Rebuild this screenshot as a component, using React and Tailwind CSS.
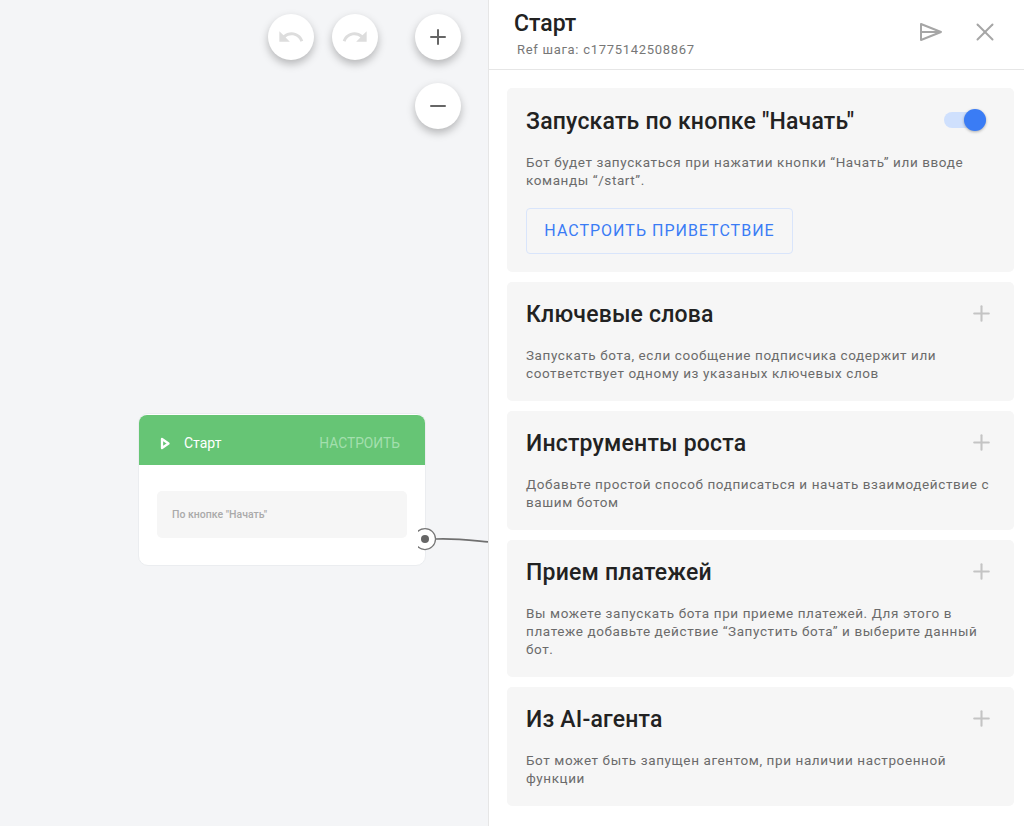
import { Plus, Minus, X } from "lucide-react";

const sections = [
  {
    title: "Ключевые слова",
    text: "Запускать бота, если сообщение подписчика содержит или соответствует одному из указаных ключевых слов",
  },
  {
    title: "Инструменты роста",
    text: "Добавьте простой способ подписаться и начать взаимодействие с вашим ботом",
  },
  {
    title: "Прием платежей",
    text: "Вы можете запускать бота при приеме платежей. Для этого в платеже добавьте действие “Запустить бота” и выберите данный бот.",
  },
  {
    title: "Из AI-агента",
    text: "Бот может быть запущен агентом, при наличии настроенной функции",
  },
];

function RoundButton({ className, children }) {
  return (
    <button className={`absolute w-[46px] h-[46px] rounded-full bg-white flex items-center justify-center shadow-[0_4px_9px_rgba(0,0,0,0.26)] ${className}`}>
      {children}
    </button>
  );
}

function Section({ title, text }) {
  return (
    <div className="bg-[#f6f6f6] rounded-[5px] px-[19px] pt-[16px] pb-[19px]">
      <div className="flex items-center justify-between h-[30px]">
        <h3 className="mt-[5px] text-[23px] tracking-[0.2px] font-medium text-[#222222]">{title}</h3>
        <Plus size={25} strokeWidth={2} className="mt-[1px] text-[#c4c4c4] mr-[1px]" />
      </div>
      <p className="mt-[18px] text-[13.5px] leading-[18px] tracking-[0.6px] text-[#6b6b6b] pr-[4px]">{text}</p>
    </div>
  );
}

export default function App() {
  return (
    <div className="flex w-[1024px] h-[826px] overflow-hidden font-['Roboto',sans-serif] bg-[#f4f5f7]">
      {/* Canvas */}
      <div className="relative w-[488px] shrink-0">
        <RoundButton className="left-[268px] top-[14px]">
          <svg width="28" height="28" viewBox="0 0 24 24" fill="#dddddd">
            <path d="M12.5 8c-2.65 0-5.05.99-6.9 2.6L2 7v9h9l-3.62-3.62c1.39-1.16 3.16-1.88 5.12-1.88 3.54 0 6.55 2.31 7.6 5.5l2.37-.78C21.08 11.03 17.15 8 12.5 8z" />
          </svg>
        </RoundButton>
        <RoundButton className="left-[332px] top-[14px]">
          <svg width="28" height="28" viewBox="0 0 24 24" fill="#dddddd">
            <path d="M18.4 10.6C16.55 8.99 14.15 8 11.5 8c-4.65 0-8.58 3.03-9.96 7.22L3.9 16c1.05-3.19 4.05-5.5 7.6-5.5 1.95 0 3.73.72 5.12 1.88L13 16h9V7l-3.6 3.6z" />
          </svg>
        </RoundButton>
        <RoundButton className="left-[415px] top-[14px]">
          <Plus size={24} strokeWidth={2} className="text-[#666666]" />
        </RoundButton>
        <RoundButton className="left-[415px] top-[83px]">
          <Minus size={24} strokeWidth={2} className="text-[#666666]" />
        </RoundButton>

        {/* Start node */}
        <div className="absolute left-[138px] top-[413px] w-[288px] h-[153px] bg-white rounded-[10px] border border-[#ebedf0] py-px">
          <div className="flex items-center h-[50px] bg-[#66c575] rounded-t-[8px] pt-[7px] pl-[21px] pr-[25px]">
            <svg width="12" height="13" viewBox="0 0 12 13" className="shrink-0">
              <path d="M2 2 L8.5 6.5 L2 11 Z" fill="none" stroke="#ffffff" strokeWidth="2.3" strokeLinejoin="round" />
            </svg>
            <span className="ml-[12px] text-[14px] text-white">Старт</span>
            <span className="ml-auto text-[13.8px] text-[#a3dfae]">НАСТРОИТЬ</span>
          </div>
          <div className="mt-[26px] mx-[18px] h-[47px] bg-[#f6f6f6] rounded-[5px] flex items-center pl-[15px]">
            <span className="text-[10.5px] font-medium text-[#aaaaaa]">По кнопке "Начать"</span>
          </div>
        </div>

        {/* Output port and link */}
        <svg width="70" height="30" viewBox="0 0 70 30" className="absolute left-[418px] top-[525px]">
          <path d="M18 14 C 35 13, 50 15, 70 17" fill="none" stroke="#707070" strokeWidth="1.75" />
          <circle cx="7" cy="14" r="10.5" fill="#ffffff" stroke="#777777" strokeWidth="1.25" />
          <circle cx="7" cy="14" r="4" fill="#666666" />
        </svg>
      </div>

      {/* Side panel */}
      <div className="flex flex-col w-[536px] h-full bg-white border-l border-[#e6e6e6]">
        <div className="flex items-start justify-between h-[70px] shrink-0 border-b border-[#e6e6e6] pl-[25px] pr-[24px]">
          <div>
            <h2 className="mt-[10px] text-[23px] leading-[28px] font-medium text-[#222222]">Старт</h2>
            <p className="mt-[3px] ml-[3px] text-[13px] leading-[18px] tracking-[0.7px] text-[#777777]">Ref шага: c1775142508867</p>
          </div>
          <div className="flex items-center gap-[27px] mt-[17px]">
            <svg width="24" height="20" viewBox="0 0 24 20" fill="none" stroke="#a6a6a6" strokeWidth="2" strokeLinejoin="round">
              <path d="M2 2 L22 10 L2 18 Z M3 10 H22" />
            </svg>
            <X size={30} strokeWidth={1.6} className="text-[#a6a6a6]" />
          </div>
        </div>

        <div className="flex flex-col gap-[10px] pt-[18px] pl-[18px] pr-[10px]">
          <div className="bg-[#f6f6f6] rounded-[5px] px-[19px] pt-[17px] pb-[18px]">
            <div className="flex items-center justify-between h-[30px]">
              <h3 className="mt-[4px] text-[23px] tracking-[0.2px] font-medium text-[#222222]">Запускать по кнопке "Начать"</h3>
              <div className="relative w-[42px] h-[16px] mr-[9px] rounded-full bg-[#cfe0fd]">
                <span className="absolute right-0 top-[-3px] w-[22px] h-[22px] rounded-full bg-[#3a7cf5] shadow-[0_1px_3px_rgba(0,0,0,0.3)]" />
              </div>
            </div>
            <p className="mt-[18px] text-[13.5px] leading-[18px] tracking-[0.6px] text-[#6b6b6b] pr-[4px]">
              Бот будет запускаться при нажатии кнопки “Начать” или вводе команды “/start”.
            </p>
            <button className="block mt-[19px] w-[267px] h-[46px] rounded-[4px] border border-[#d9e5fb] text-[16px] tracking-[1px] text-[#3a7cf5]">
              НАСТРОИТЬ ПРИВЕТСТВИЕ
            </button>
          </div>
          {sections.map((s) => (
            <Section key={s.title} title={s.title} text={s.text} />
          ))}
        </div>
      </div>
    </div>
  );
}
